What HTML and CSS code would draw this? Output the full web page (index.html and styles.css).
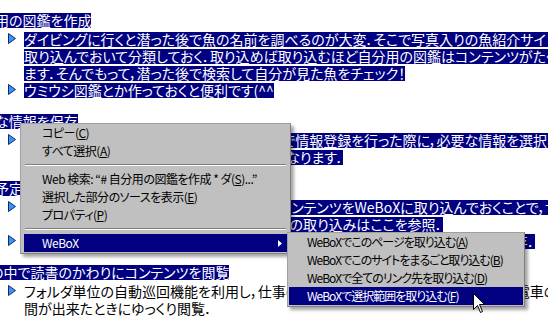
FILE: index.html
```html
<!DOCTYPE html>
<html>
<head>
	<meta charset="utf-8">
	<title>WeBoX</title>
	<link rel="stylesheet" href="styles.css">
</head>
<body>
	<section id="doc">
		<div class="topic">
			<h2 class="topic-title"><span class="sel">用の図鑑を作成</span></h2>
			<ul class="points">
				<li class="point">
					<span class="mark"><svg width="8" height="11" viewBox="0 0 8 11"><polygon points="0.5,0.5 7.5,5.5 0.5,10.5" fill="#3b95f0" stroke="#0a2a7a"/></svg></span>
					<div class="lines">
						<div class="line"><span class="sel">ダイビングに行くと潜った後で魚の名前を調べるのが大変．そこで写真入りの魚紹介サイトを</span></div>
						<div class="line"><span class="sel">取り込んでおいて分類しておく．取り込めば取り込むほど自分用の図鑑はコンテンツがたくさんになり</span></div>
						<div class="line"><span class="sel">ます．そんでもって，潜った後で検索して自分が見た魚をチェック！</span></div>
					</div>
				</li>
				<li class="point">
					<span class="mark"><svg width="8" height="11" viewBox="0 0 8 11"><polygon points="0.5,0.5 7.5,5.5 0.5,10.5" fill="#3b95f0" stroke="#0a2a7a"/></svg></span>
					<div class="lines">
						<div class="line"><span class="sel">ウミウシ図鑑とか作っておくと便利です(^^</span></div>
					</div>
				</li>
			</ul>
		</div>

		<div class="topic">
			<h2 class="topic-title"><span class="sel">な情報を保存</span></h2>
			<ul class="points">
				<li class="point">
					<span class="mark"><svg width="8" height="11" viewBox="0 0 8 11"><polygon points="0.5,0.5 7.5,5.5 0.5,10.5" fill="#3b95f0" stroke="#0a2a7a"/></svg></span>
					<div class="lines">
						<div class="line"><span class="sel">WeBoXを使えば，Webサイトやショップなどで情報登録を行った際に，必要な情報を選択して</span></div>
						<div class="line"><span class="sel">保存しておけば，次回の再入力がとても楽になります．</span></div>
					</div>
				</li>
			</ul>
		</div>

		<div class="topic">
			<h2 class="topic-title"><span class="sel">予定表を作成して管理</span></h2>
			<ul class="points">
				<li class="point">
					<span class="mark"><svg width="8" height="11" viewBox="0 0 8 11"><polygon points="0.5,0.5 7.5,5.5 0.5,10.5" fill="#3b95f0" stroke="#0a2a7a"/></svg></span>
					<div class="lines">
						<div class="line"><span class="sel">いつもチェックしているお気に入りサイトのコンテンツをWeBoXに取り込んでおくことで，サーバーが</span></div>
						<div class="line"><span class="sel">後から閉鎖されても安心です．サイトまるごとの取り込みはここを参照．</span></div>
					</div>
				</li>
				<li class="point">
					<span class="mark"><svg width="8" height="11" viewBox="0 0 8 11"><polygon points="0.5,0.5 7.5,5.5 0.5,10.5" fill="#3b95f0" stroke="#0a2a7a"/></svg></span>
					<div class="lines">
						<div class="line"><span class="sel">期間限定のキャンペーンページやニュース記事等，すぐ消えてしまうコンテンツも保存．</span></div>
					</div>
				</li>
			</ul>
		</div>

		<div class="topic">
			<h2 class="topic-title cut-deep"><span class="sel">の中で読書のかわりにコンテンツを閲覧</span></h2>
			<ul class="points">
				<li class="point">
					<span class="mark"><svg width="8" height="11" viewBox="0 0 8 11"><polygon points="0.5,0.5 7.5,5.5 0.5,10.5" fill="#3b95f0" stroke="#0a2a7a"/></svg></span>
					<div class="lines">
						<div class="line">フォルダ単位の自動巡回機能を利用し，仕事の合間やちょっとした休憩の時間，通勤電車の中で</div>
						<div class="line">間が出来たときにゆっくり閲覧．</div>
					</div>
				</li>
			</ul>
		</div>
	</section>

	<!-- context menu -->
	<div class="menu main-menu">
		<div class="item">コピー(<u>C</u>)</div>
		<div class="item">すべて選択(<u>A</u>)</div>
		<div class="sep"></div>
		<div class="item">Web 検索: “# 自分用の図鑑を作成 * ダ(<u>S</u>)...”</div>
		<div class="item">選択した部分のソースを表示(<u>E</u>)</div>
		<div class="item">プロパティ(<u>P</u>)</div>
		<div class="sep"></div>
		<div class="item active">WeBoX<svg class="arrow" width="4" height="7" viewBox="0 0 4 7"><polygon points="0,0 4,3.5 0,7" fill="#fff"/></svg></div>
	</div>

	<div class="menu sub-menu">
		<div class="item">WeBoXでこのページを取り込む(<u>A</u>)</div>
		<div class="item">WeBoXでこのサイトをまるごと取り込む(<u>B</u>)</div>
		<div class="item">WeBoXで全てのリンク先を取り込む(<u>D</u>)</div>
		<div class="item active">WeBoXで選択範囲を取り込む(<u>F</u>)</div>
	</div>

	<svg class="cursor" width="13" height="21" viewBox="0 0 13 21"><path d="M0.5,0.5 L0.5,16.5 L4.5,12.5 L7.5,19.5 L9.5,18.5 L6.5,11.5 L11.5,11.5 Z" fill="#fff" stroke="#000"/></svg>
</body>
</html>
```

FILE: styles.css
```css
html, body {
	margin: 0;
	padding: 0;
}

body {
	width: 548px;
	height: 327px;
	overflow: hidden;
	position: relative;
	background-color: white;
	color: black;
	font-family: "Noto Sans CJK JP", sans-serif;
	font-size: 14px;
	font-feature-settings: "palt";
}

#doc {
	padding-top: 13px;
}

.topic {
	margin-bottom: 14px;
}

.topic-title {
	margin: 0 0 0 -5px;
	font-size: 14px;
	font-weight: normal;
	height: 15px;
	line-height: 15px;
	white-space: nowrap;
}
.topic-title.cut-deep {
	margin-left: -10px;
}

.sel {
	display: inline-block;
	height: 15px;
	line-height: 15px;
	background-color: #000080;
	color: white;
}

.points {
	list-style: none;
	margin: 4px 0 0 0;
	padding: 0;
}

.point {
	display: flex;
}

.mark {
	flex: none;
	width: 24px;
	box-sizing: border-box;
	padding: 1px 0 0 8px;
	line-height: 0;
}

.line {
	height: 17px;
	line-height: 15px;
	white-space: nowrap;
}

/* popup menus sit over the page */
.menu {
	position: absolute;
	box-sizing: border-box;
	background-color: #c0c0c0;
	border: 1px solid #808080;
	border-top-color: #a0a0a0;
	border-left-color: #a0a0a0;
	box-shadow: 3px 3px 3px rgba(0,0,0,0.35);
	font-size: 12px;
	letter-spacing: -0.5px;
	cursor: default;
}

.main-menu {
	left: 20px;
	top: 123px;
	width: 271px;
	padding: 0 3px 1px 3px;
}

.sub-menu {
	left: 287px;
	top: 232px;
	width: 238px;
	padding: 0 1px 1px 1px;
	letter-spacing: -1px;
}

.item {
	position: relative;
	height: 18px;
	line-height: 18px;
	padding-left: 18px;
	white-space: nowrap;
}

.item u {
	text-underline-offset: 1px;
}

.item.active {
	background-color: #000080;
	color: white;
}

.item .arrow {
	position: absolute;
	right: 5px;
	top: 6px;
}

.sep {
	height: 0;
	margin: 4px 1px;
	border-top: 1px solid #808080;
	border-bottom: 1px solid white;
}

.cursor {
	position: absolute;
	left: 473px;
	top: 293px;
}
```
